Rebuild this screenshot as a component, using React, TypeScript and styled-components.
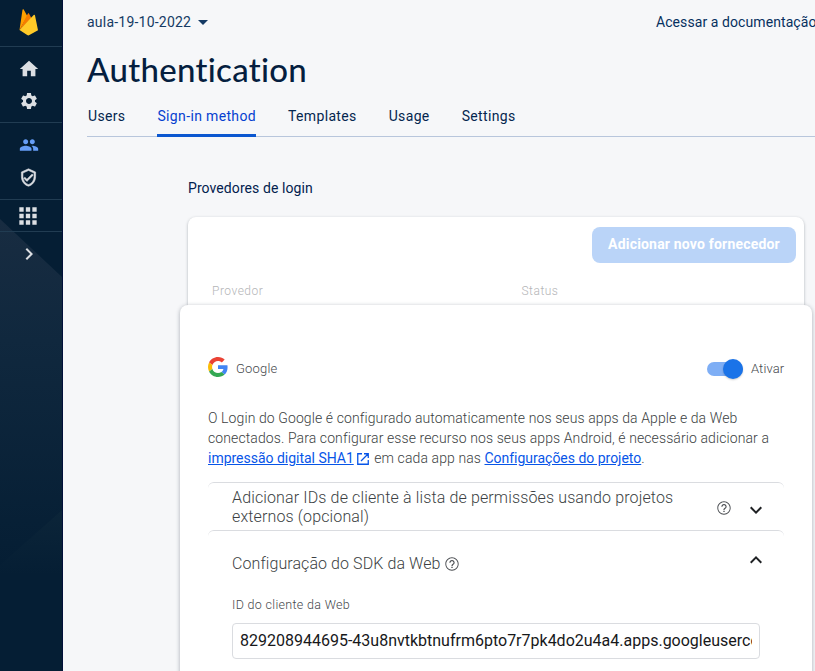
import React from "react";
import styled, { createGlobalStyle } from "styled-components";

const GlobalStyle = createGlobalStyle`
  *, *::before, *::after { box-sizing: border-box; }
  html, body { margin: 0; height: 100%; overflow: hidden; }
  body { font-family: Roboto, "Liberation Sans", sans-serif; background: #f6f7f9; color: #04305c; }
  svg { display: block; flex: none; }
`;

const Screen = styled.div`
  display: flex;
  width: 100%;
  height: 100vh;
  overflow: hidden;
`;

const Sidebar = styled.nav`
  position: relative;
  flex: none;
  width: 63px;
  height: 100%;
  background: #051e34;
  border-right: 1px solid #02103a;
`;

const SidebarArt = styled.svg`
  position: absolute;
  inset: 0;
`;

const SidebarGroup = styled.div<{ $height: number; $last?: boolean }>`
  position: relative;
  display: flex;
  flex-direction: column;
  align-items: center;
  justify-content: center;
  padding-right: 5px;
  height: ${(p) => p.$height}px;
  border-bottom: ${(p) => (p.$last ? "none" : "1px solid #213c52")};
`;

const SidebarItem = styled.a<{ $active?: boolean; $height?: number }>`
  display: flex;
  align-items: center;
  justify-content: center;
  height: ${(p) => p.$height ?? 32}px;
  color: ${(p) => (p.$active ? "#669df6" : "#dcdfe3")};
`;

const AppsItem = styled(SidebarItem)`
  margin-right: 1px;
`;

const Main = styled.main`
  flex: 1;
  min-width: 0;
  display: flex;
  flex-direction: column;
  overflow: hidden;
`;

const TopBar = styled.header`
  flex: none;
  display: flex;
  justify-content: space-between;
  height: 44px;
  padding-left: 24px;
  font-size: 14px;
  font-weight: 400;
  line-height: 44px;
  white-space: nowrap;
`;

const Project = styled.div`
  display: flex;
  align-items: center;
  gap: 7px;
  color: #143a64;
  letter-spacing: 0.22px;
`;

const DocsLink = styled.a`
  flex: none;
  width: 159px;
  color: #06305f;
  letter-spacing: 0.08px;
`;

const Title = styled.h1`
  flex: none;
  margin: 0 0 0 24px;
  height: 52px;
  font-family: Lato, Roboto, sans-serif;
  font-size: 33px;
  font-weight: 500;
  line-height: 51px;
  letter-spacing: 0.3px;
  font-variant-ligatures: none;
  color: #051e3f;
`;

const Tabs = styled.div`
  flex: none;
  display: flex;
  gap: 32px;
  height: 41px;
  margin-left: 24px;
  padding-left: 1px;
  border-bottom: 1px solid #b8c6dc;
`;

const Tab = styled.a<{ $active?: boolean }>`
  height: 41px;
  border-bottom: ${(p) => (p.$active ? "3px solid #0b57d0" : "none")};
  border-radius: 2px 2px 0 0;
  font-size: 14px;
  font-weight: 400;
  line-height: 40px;
  letter-spacing: 0.35px;
  white-space: nowrap;
  color: ${(p) => (p.$active ? "#0540d0" : "#04264f")};
`;

const Content = styled.section`
  flex: 1;
  display: flex;
  flex-direction: column;
  padding: 41px 3px 0 117px;
`;

const SectionTitle = styled.h2`
  margin: 0 0 19px 8px;
  font-size: 14px;
  font-weight: 400;
  line-height: 20px;
  letter-spacing: 0.08px;
  color: #02214e;
`;

const ProviderCard = styled.div`
  flex: none;
  height: 88px;
  margin: 0 8px;
  padding: 10px 8px 0;
  border-radius: 8px 8px 0 0;
  background: #fff;
  box-shadow: 0 1px 3px rgba(40, 50, 65, 0.36);
`;

const AddButton = styled.button`
  display: block;
  width: 204px;
  height: 36px;
  margin: 0 0 0 auto;
  padding: 0 0 2px;
  border: 0;
  border-radius: 8px;
  background: #bad4f8;
  color: #fff;
  font: 700 14px Roboto, sans-serif;
  letter-spacing: 0.19px;
`;

const ColumnHeads = styled.div`
  display: grid;
  grid-template-columns: 309.5px 1fr;
  margin: 19px 0 0 16px;
  font-size: 12px;
  font-weight: 300;
  line-height: 18px;
  letter-spacing: 0.5px;
  color: #b4b5b7;
`;

const Dialog = styled.div`
  position: relative;
  flex: 1;
  min-height: 380px;
  padding: 51px 28px 0;
  border-radius: 8px 8px 0 0;
  background: #fff;
  box-shadow: 0 1px 4px rgba(40, 50, 65, 0.38);
  font-weight: 300;
  color: #3c3f43;
`;

const ProviderRow = styled.div`
  display: flex;
  align-items: center;
  height: 22px;
  font-size: 13px;
  letter-spacing: 0.2px;
  color: #45484c;
`;

const ProviderName = styled.span`
  margin-left: 8px;
  padding-top: 3px;
`;

const Toggle = styled.span`
  display: flex;
  align-items: center;
  justify-content: flex-end;
  width: 36px;
  height: 14px;
  margin: 3px 8px 0 auto;
  border-radius: 7px;
  background: #7eaef5;
`;

const Knob = styled.span`
  width: 20px;
  height: 20px;
  border-radius: 50%;
  background: #1a73e8;
  box-shadow: 0 1px 2px rgba(0, 0, 0, 0.2);
`;

const ToggleLabel = styled.span`
  width: 33px;
  padding-top: 3px;
  letter-spacing: 0.1px;
`;

const Description = styled.p`
  margin: 30px 0 0;
  font-size: 14px;
  line-height: 20px;
  letter-spacing: 0.1px;
`;

const Line = styled.span`
  display: flex;
  white-space: pre;
`;

const Link = styled.a`
  font-weight: 400;
  letter-spacing: -0.02px;
  color: #0755e8;
  text-decoration: underline;
`;

const LinkIcon = styled.svg`
  margin: 4px 1px 0 2px;
`;

const PanelList = styled.div`
  margin-top: 14px;
`;

const Panel = styled.div<{ $height: number }>`
  display: flex;
  align-items: center;
  height: ${(p) => p.$height}px;
  padding: 0 18px 0 24px;
  border-top: 1px solid #dadce0;
  border-radius: 6px 6px 0 0;
  font-size: 16px;
  line-height: 19px;
  letter-spacing: 0.135px;
  white-space: nowrap;
`;

const PanelTitle = styled.span`
  display: flex;
  flex-direction: column;
  flex: 1;
`;

const InlineTitle = styled.span`
  display: flex;
  align-items: center;
  gap: 3px;
  flex: 1;
  padding-top: 2px;
  letter-spacing: 0.08px;
`;

const HelpWrap = styled.span<{ $right?: boolean }>`
  color: #4b4e52;
  margin-top: ${(p) => (p.$right ? 2 : 0)}px;
  margin-right: ${(p) => (p.$right ? 12 : 0)}px;
`;

const Chevron = styled.span<{ $shift: number }>`
  color: #1f2124;
  margin-top: ${(p) => p.$shift}px;
  margin-right: -2px;
`;

const FieldLabel = styled.label`
  display: block;
  margin: 2px 0 0 24px;
  font-size: 12.5px;
  line-height: 18px;
  letter-spacing: 0.32px;
  color: #45484c;
`;

const Field = styled.div`
  height: 36px;
  margin: 9px 24px 0;
  padding: 0 7px;
  border: 1px solid #dadce0;
  border-radius: 4px;
  color: #17181a;
`;

const FieldValue = styled.div`
  overflow: hidden;
  font-size: 16px;
  font-weight: 400;
  line-height: 33px;
  letter-spacing: 0;
  white-space: nowrap;
`;

const Shape = ({ d, size = 20, stroke = 0 }: { d: string; size?: number; stroke?: number }) => (
  <svg width={size} height={size} viewBox="0 0 24 24" fill="currentColor" stroke={stroke ? "currentColor" : "none"} strokeWidth={stroke}>
    <path d={d} />
  </svg>
);

const icons = {
  home: "M10 20v-6h4v6h5v-8h3L12 3 2 12h3v8z",
  settings:
    "M19.14 12.94c.04-.3.06-.61.06-.94 0-.32-.02-.64-.07-.94l2.03-1.58c.18-.14.23-.41.12-.61l-1.92-3.32c-.12-.22-.37-.29-.59-.22l-2.39.96c-.5-.38-1.03-.7-1.62-.94l-.36-2.54c-.04-.24-.24-.41-.48-.41h-3.84c-.24 0-.43.17-.47.41l-.36 2.54c-.59.24-1.13.57-1.62.94l-2.39-.96c-.22-.08-.47 0-.59.22L2.74 8.87c-.12.21-.08.47.12.61l2.03 1.58c-.05.3-.09.63-.09.94s.02.64.07.94l-2.03 1.58c-.18.14-.23.41-.12.61l1.92 3.32c.12.22.37.29.59.22l2.39-.96c.5.38 1.03.7 1.62.94l.36 2.54c.05.24.24.41.48.41h3.84c.24 0 .44-.17.47-.41l.36-2.54c.59-.24 1.13-.56 1.62-.94l2.39.96c.22.08.47 0 .59-.22l1.92-3.32c.12-.22.07-.47-.12-.61l-2.01-1.58zM12 15.6c-1.98 0-3.6-1.62-3.6-3.6s1.62-3.6 3.6-3.6 3.6 1.62 3.6 3.6-1.62 3.6-3.6 3.6z",
  people:
    "M16 11c1.66 0 2.99-1.34 2.99-3S17.66 5 16 5c-1.66 0-3 1.34-3 3s1.34 3 3 3zm-8 0c1.66 0 2.99-1.34 2.99-3S9.66 5 8 5C6.34 5 5 6.34 5 8s1.34 3 3 3zm0 2c-2.33 0-7 1.17-7 3.5V19h14v-2.5c0-2.33-4.67-3.5-7-3.5zm8 0c-.29 0-.62.02-.97.05 1.16.84 1.97 1.97 1.97 3.45V19h6v-2.5c0-2.33-4.67-3.5-7-3.5z",
  shield:
    "M12 1 3 5v6c0 5.55 3.84 10.74 9 12 5.16-1.26 9-6.45 9-12V5l-9-4zm7 10c0 4.52-2.98 8.69-7 9.93-4.02-1.24-7-5.41-7-9.93V6.3l7-3.11 7 3.11V11zm-11.59.59L6 13l4 4 8-8-1.41-1.42L10 14.17z",
  apps: "M4 4h4v4H4zM10 4h4v4h-4zM16 4h4v4h-4zM4 10h4v4H4zM10 10h4v4h-4zM16 10h4v4h-4zM4 16h4v4H4zM10 16h4v4h-4zM16 16h4v4h-4z",
  right: "M8.59 16.59 13.17 12 8.59 7.41 10 6l6 6-6 6z",
  down: "M7.41 8.59 12 13.17l4.59-4.58L18 10l-6 6-6-6z",
  up: "M7.41 15.41 12 10.83l4.59 4.58L18 14l-6-6-6 6z",
  help: "M11 18h2v-2h-2v2zm1-16C6.48 2 2 6.48 2 12s4.48 10 10 10 10-4.48 10-10S17.52 2 12 2zm0 18.6c-4.74 0-8.6-3.86-8.6-8.6S7.26 3.4 12 3.4s8.6 3.86 8.6 8.6-3.86 8.6-8.6 8.6zM12 6c-2.21 0-4 1.79-4 4h1.7c0-1.3 1.03-2.3 2.3-2.3s2.3 1 2.3 2.3c0 2-3.2 1.75-3.2 5h1.8c0-2.25 3.1-2.5 3.1-5 0-2.21-1.79-4-4-4z",
};

const FirebaseLogo = () => (
  <svg width="20" height="27" viewBox="0 0 20 27">
    <path d="M.5 21 3.5.8c.1-.7.9-.8 1.2-.2l3.7 6.7z" fill="#ffa000" />
    <path d="m.5 21 8.3-16.3c.3-.6 1-.6 1.3 0l2.4 4.6z" fill="#f57c00" />
    <path d="m.5 21 14.2-14.9c.5-.5 1.2-.2 1.3.4L19 21.3l-8.6 4.8c-.7.4-1.5.4-2.200 0z" fill="#ffca28" />
  </svg>
);

const GoogleLogo = () => (
  <svg width="20" height="20" viewBox="0 0 48 48">
    <path fill="#EA4335" d="M24 9.5c3.54 0 6.71 1.22 9.21 3.6l6.85-6.85C35.9 2.38 30.47 0 24 0 14.62 0 6.51 5.38 2.56 13.22l7.98 6.19C12.43 13.72 17.74 9.5 24 9.5z" />
    <path fill="#4285F4" d="M46.98 24.55c0-1.57-.15-3.09-.38-4.55H24v9.02h12.94c-.58 2.96-2.26 5.48-4.78 7.18l7.73 6c4.51-4.18 7.09-10.36 7.09-17.65z" />
    <path fill="#FBBC05" d="M10.53 28.59c-.48-1.45-.76-2.99-.76-4.59s.27-3.14.76-4.59l-7.98-6.19C.92 16.46 0 20.12 0 24c0 3.88.92 7.54 2.56 10.78l7.97-6.19z" />
    <path fill="#34A853" d="M24 48c6.48 0 11.93-2.13 15.89-5.81l-7.73-6c-2.15 1.45-4.92 2.3-8.16 2.3-6.26 0-11.57-4.22-13.47-9.91l-7.98 6.19C6.51 42.62 14.62 48 24 48z" />
  </svg>
);

const tabs = ["Users", "Sign-in method", "Templates", "Usage", "Settings"];

export default function App() {
  return (
    <>
      <GlobalStyle />
      <Screen>
        <Sidebar>
          <SidebarArt width="62" height="671" viewBox="0 0 62 671">
            <defs>
              <linearGradient id="upper" x1="0" y1="220" x2="0" y2="565" gradientUnits="userSpaceOnUse">
                <stop offset="0" stopColor="#182c41" />
                <stop offset=".35" stopColor="#10283e" />
                <stop offset="1" stopColor="#051e34" />
              </linearGradient>
              <linearGradient id="lower" x1="0" y1="510" x2="0" y2="575" gradientUnits="userSpaceOnUse">
                <stop offset="0" stopColor="#0c2539" />
                <stop offset="1" stopColor="#051e34" />
              </linearGradient>
            </defs>
            <path d="M0 219 62 277V510L0 565z" fill="url(#upper)" />
            <path d="M62 510V575H0V565z" fill="url(#lower)" />
          </SidebarArt>
          <SidebarGroup $height={47}>
            <SidebarItem $height={44}><FirebaseLogo /></SidebarItem>
            <SidebarItem $height={2} />
          </SidebarGroup>
          <SidebarGroup $height={76}>
            <SidebarItem><Shape d={icons.home} size={22} /></SidebarItem>
            <SidebarItem><Shape d={icons.settings} size={20} /></SidebarItem>
          </SidebarGroup>
          <SidebarGroup $height={77}>
            <SidebarItem $active><Shape d={icons.people} size={20} /></SidebarItem>
            <SidebarItem><Shape d={icons.shield} size={19} stroke={0.7} /></SidebarItem>
          </SidebarGroup>
          <SidebarGroup $height={32}>
            <AppsItem $height={30}><Shape d={icons.apps} size={26} /></AppsItem>
          </SidebarGroup>
          <SidebarGroup $height={44} $last>
            <SidebarItem><Shape d={icons.right} size={24} /></SidebarItem>
          </SidebarGroup>
        </Sidebar>
        <Main>
          <TopBar>
            <Project>
              aula-19-10-2022
              <svg width="10" height="5" viewBox="0 0 10 5" fill="currentColor"><path d="M0 0h10L5 5z" /></svg>
            </Project>
            <DocsLink>Acessar a documentação</DocsLink>
          </TopBar>
          <Title>Authentication</Title>
          <Tabs>
            {tabs.map((name) => (
              <Tab key={name} $active={name === "Sign-in method"}>{name}</Tab>
            ))}
          </Tabs>
          <Content>
            <SectionTitle>Provedores de login</SectionTitle>
            <ProviderCard>
              <AddButton>Adicionar novo fornecedor</AddButton>
              <ColumnHeads>
                <span>Provedor</span>
                <span>Status</span>
              </ColumnHeads>
            </ProviderCard>
            <Dialog>
              <ProviderRow>
                <GoogleLogo />
                <ProviderName>Google</ProviderName>
                <Toggle><Knob /></Toggle>
                <ToggleLabel>Ativar</ToggleLabel>
              </ProviderRow>
              <Description>
                <Line>O Login do Google é configurado automaticamente nos seus apps da Apple e da Web</Line>
                <Line>conectados. Para configurar esse recurso nos seus apps Android, é necessário adicionar a</Line>
                <Line>
                  <Link>impressão digital SHA1</Link>
                  <LinkIcon width="14" height="14" viewBox="0 0 14 14" fill="none" stroke="#0755e8" strokeWidth="1.3">
                    <path d="M6 1.75H1.75v10.5h10.5V8M8 1.75h4.25V6M12 2 5 9" />
                  </LinkIcon>
                  <span> em cada app nas </span>
                  <Link>Configurações do projeto</Link>
                  <span>.</span>
                </Line>
              </Description>
              <PanelList>
                <Panel $height={48}>
                  <PanelTitle>
                    <span>Adicionar IDs de cliente à lista de permissões usando projetos</span>
                    <span>externos (opcional)</span>
                  </PanelTitle>
                  <HelpWrap $right><Shape d={icons.help} size={16} /></HelpWrap>
                  <Chevron $shift={6}><Shape d={icons.down} size={24} /></Chevron>
                </Panel>
                <Panel $height={64}>
                  <InlineTitle>
                    Configuração do SDK da Web
                    <HelpWrap><Shape d={icons.help} size={16} /></HelpWrap>
                  </InlineTitle>
                  <Chevron $shift={-6}><Shape d={icons.up} size={24} /></Chevron>
                </Panel>
              </PanelList>
              <FieldLabel>ID do cliente da Web</FieldLabel>
              <Field>
                <FieldValue>829208944695-43u8nvtkbtnufrm6pto7r7pk4do2u4a4.apps.googleusercontent.com</FieldValue>
              </Field>
            </Dialog>
          </Content>
        </Main>
      </Screen>
    </>
  );
}
